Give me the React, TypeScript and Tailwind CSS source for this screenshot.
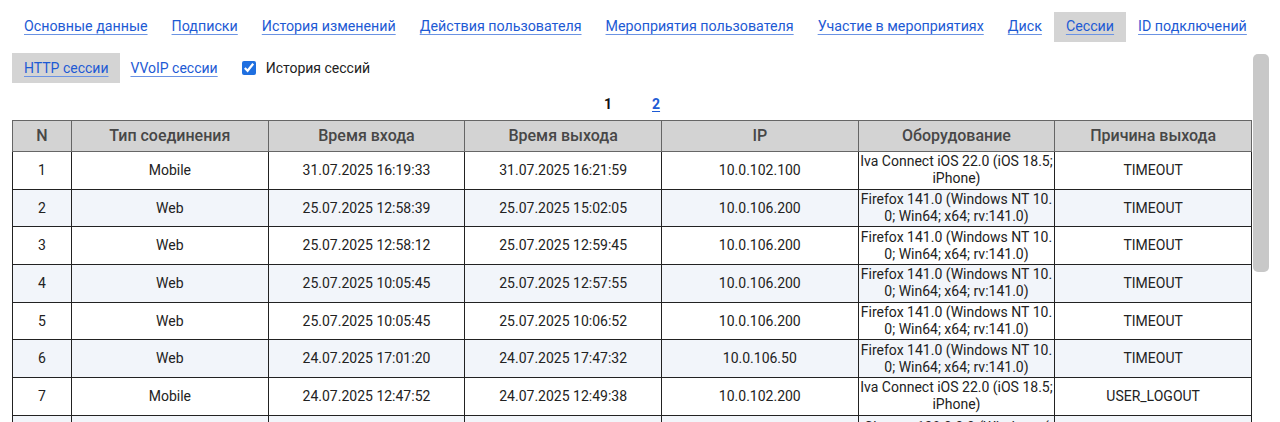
import React from 'react';

type Session = {
  n: number;
  kind: string;
  login: string;
  logout: string;
  ip: string;
  device: string[];
  reason: string;
};

const IVA = ['Iva Connect iOS 22.0 (iOS 18.5;', 'iPhone)'];
const FF = ['Firefox 141.0 (Windows NT 10.', '0; Win64; x64; rv:141.0)'];

const sessions: Session[] = [
  { n: 1, kind: 'Mobile', login: '31.07.2025 16:19:33', logout: '31.07.2025 16:21:59', ip: '10.0.102.100', device: IVA, reason: 'TIMEOUT' },
  { n: 2, kind: 'Web', login: '25.07.2025 12:58:39', logout: '25.07.2025 15:02:05', ip: '10.0.106.200', device: FF, reason: 'TIMEOUT' },
  { n: 3, kind: 'Web', login: '25.07.2025 12:58:12', logout: '25.07.2025 12:59:45', ip: '10.0.106.200', device: FF, reason: 'TIMEOUT' },
  { n: 4, kind: 'Web', login: '25.07.2025 10:05:45', logout: '25.07.2025 12:57:55', ip: '10.0.106.200', device: FF, reason: 'TIMEOUT' },
  { n: 5, kind: 'Web', login: '25.07.2025 10:05:45', logout: '25.07.2025 10:06:52', ip: '10.0.106.200', device: FF, reason: 'TIMEOUT' },
  { n: 6, kind: 'Web', login: '24.07.2025 17:01:20', logout: '24.07.2025 17:47:32', ip: '10.0.106.50', device: FF, reason: 'TIMEOUT' },
  { n: 7, kind: 'Mobile', login: '24.07.2025 12:47:52', logout: '24.07.2025 12:49:38', ip: '10.0.102.200', device: IVA, reason: 'USER_LOGOUT' },
  {
    n: 8,
    kind: 'Web',
    login: '24.07.2025 11:02:14',
    logout: '24.07.2025 11:58:40',
    ip: '10.0.106.50',
    device: ['Chrome 138.0.0.0 (Windows (', 'NT 10.0; Win64; x64)', 'AppleWebKit/537.36'],
    reason: 'TIMEOUT',
  },
];

const tabs = [
  'Основные данные',
  'Подписки',
  'История изменений',
  'Действия пользователя',
  'Мероприятия пользователя',
  'Участие в мероприятиях',
  'Диск',
  'Сессии',
  'ID подключений',
];

const columns = ['N', 'Тип соединения', 'Время входа', 'Время выхода', 'IP', 'Оборудование', 'Причина выхода'];

const linkCls =
  'flex h-full items-center whitespace-nowrap px-3 text-[#1d5ad4] underline decoration-[#6b93e3] underline-offset-[3px]';

const App: React.FC = () => {
  return (
    <div className="h-[422px] overflow-hidden bg-white font-['Roboto',sans-serif] text-[#222]">
      {/* верхние вкладки */}
      <nav className="flex h-[42px] px-3 pt-3 text-[14.25px]">
        {tabs.map(tab => (
          <a key={tab} href="#" className={`${linkCls} ${tab === 'Сессии' ? 'bg-[#d4d4d4]' : ''}`}>
            {tab}
          </a>
        ))}
      </nav>

      <div className="mt-[11px] flex">
        <div className="min-w-0 flex-1 pl-3">
          {/* подвкладки */}
          <div className="flex h-[30px] items-center text-[14px]">
            <a href="#" className={`${linkCls} bg-[#d4d4d4]`}>
              HTTP сессии
            </a>
            <a href="#" className={`${linkCls} -ml-[2px]`}>
              VVoIP сессии
            </a>
            <label className="ml-[12px] flex items-center gap-[10px] whitespace-nowrap text-[#222]">
              <input type="checkbox" checked readOnly className="size-[14px] accent-[#1f6fe0]" />
              История сессий
            </label>
          </div>

          {/* пагинация */}
          <div className="flex h-[37px] items-center justify-center gap-[40px] pt-[5px] text-[14px] font-bold">
            <span className="text-[#111]">1</span>
            <a href="#" className="text-[#1d5ad4] underline underline-offset-2">2</a>
          </div>

          <table className="w-full table-fixed border-collapse text-center">
            <colgroup>
              <col className="w-[59px]" />
              <col />
              <col />
              <col />
              <col />
              <col />
              <col />
            </colgroup>
            <thead>
              <tr className="h-[31px] bg-[#d3d3d3]">
                {columns.map(c => (
                  <th key={c} className="border border-[#666] text-[16px] font-medium text-[#474747]">
                    {c}
                  </th>
                ))}
              </tr>
            </thead>
            <tbody>
              {sessions.map(s => (
                <tr key={s.n} className={`h-[37.7px] text-[14px] leading-[17px] ${s.n % 2 === 0 ? 'bg-[#f2f5fa]' : 'bg-white'}`}>
                  <td className="border border-[#222]">{s.n}</td>
                  <td className="border border-[#222]">{s.kind}</td>
                  <td className="border border-[#222]">{s.login}</td>
                  <td className="border border-[#222]">{s.logout}</td>
                  <td className="border border-[#222]">{s.ip}</td>
                  <td className={`border border-[#222] px-0 pb-0 ${s.device.length > 2 ? 'pt-[3px]' : 'pt-0'}`}>
                    {s.device.map(line => (
                      <span key={line} className="block whitespace-nowrap">
                        {line}
                      </span>
                    ))}
                  </td>
                  <td className="border border-[#222]">{s.reason}</td>
                </tr>
              ))}
            </tbody>
          </table>
        </div>

        {/* полоса прокрутки */}
        <div className="w-[28px] shrink-0">
          <div className="ml-px mt-px h-[218px] w-4 rounded-[5px] bg-[#c8c8c8]" />
        </div>
      </div>
    </div>
  );
};

export default App;
